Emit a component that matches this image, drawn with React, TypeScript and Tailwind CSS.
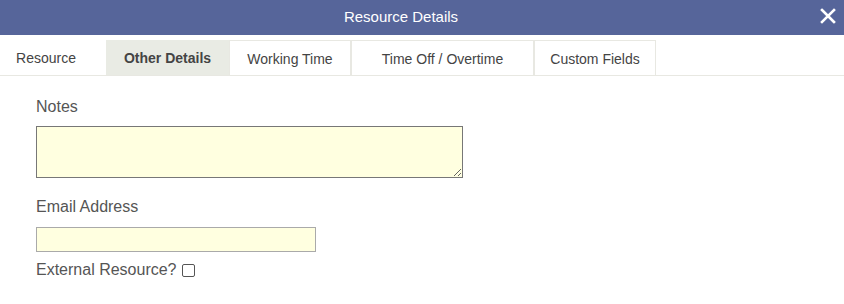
import React from "react";

export default function App() {
  const tabs = [
    { label: "Resource", w: "w-[106px] pr-[14px]", active: false, border: false },
    { label: "Other Details", w: "w-[123px]", active: true, border: false },
    { label: "Working Time", w: "w-[122px]", active: false, border: true },
    { label: "Time Off / Overtime", w: "w-[183px]", active: false, border: true },
    { label: "Custom Fields", w: "w-[122px]", active: false, border: true },
  ];
  return (
    <div className="w-[844px] h-[304px] bg-white font-['Liberation_Sans',Arial,sans-serif] overflow-hidden">
      <div className="relative h-[35px] bg-[#56659a] flex items-center justify-center pr-[42px]">
        <span className="text-white text-[15px]">Resource Details</span>
        <span className="absolute right-[8px] top-[8px] text-white">
          <svg width="16" height="16" viewBox="0 0 16 16">
            <path d="M2 2 L14 14 M14 2 L2 14" stroke="white" strokeWidth="2.6" strokeLinecap="square" />
          </svg>
        </span>
      </div>
      <div className="mt-[5px] flex h-[36px] border-b border-[#e8e8e2]">
        {tabs.map((t) => (
          <div
            key={t.label}
            className={`${t.w} flex items-center justify-center pt-[2px] text-[14px] text-[#444] ${
              t.active ? "bg-[#e9ebe4] font-bold" : "bg-white"
            } ${t.border ? "border border-b-0 border-[#e8e8e2]" : ""}`}
          >
            {t.label}
          </div>
        ))}
      </div>
      <div className="pl-[36px] pt-[22px] text-[#555]">
        <div className="text-[16px] leading-[18px]">Notes</div>
        <textarea className="mt-[10px] block w-[427px] h-[52px] bg-[#ffffe0] border border-[#777] resize-y" />
        <div className="mt-[20px] text-[16px] leading-[18px]">Email Address</div>
        <input className="mt-[11px] block w-[280px] h-[25px] bg-[#ffffe0] border border-[#aaa]" />
        <div className="mt-[9px] flex items-center text-[16px] leading-[18px]">
          <span>External Resource?</span>
          <span className="ml-[5px] inline-block w-[13px] h-[13px] border border-[#555] rounded-[2px] bg-white" />
        </div>
      </div>
    </div>
  );
}
